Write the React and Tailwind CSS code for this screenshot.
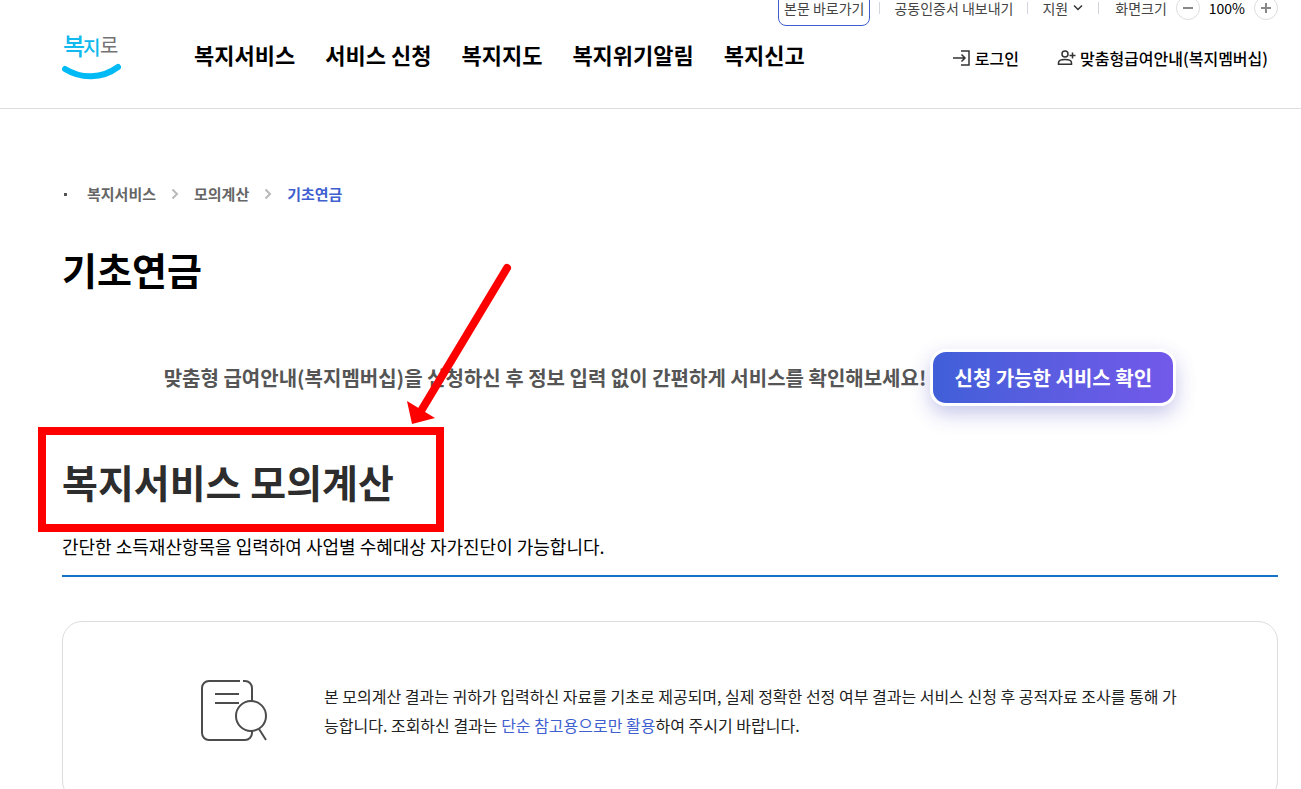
import React, { useState } from "react";

const menus = ["복지서비스", "서비스 신청", "복지지도", "복지위기알림", "복지신고"];

const Logo = () => (
  <svg width="60" height="54" viewBox="0 0 60 54" role="img" aria-label="복지로">
    <g fontWeight="500">
      <text x="1" y="28" fontSize="24" fill="#12b9ee">복</text>
      <text x="21" y="28" fontSize="19" fill="#12b9ee">지</text>
      <text x="38" y="26" fontSize="20" fontWeight="400" fill="#737373">로</text>
    </g>
    <path
      d="M3 42C19 52 40 52 56 40"
      fill="none"
      stroke="#00baf6"
      strokeWidth="6"
      strokeLinecap="round"
    />
  </svg>
);

const LoginIcon = () => (
  <svg width="18" height="18" viewBox="0 0 18 18" fill="none" stroke="#333" strokeWidth="1.5">
    <path d="M8 2h8v14H8M0 9h12M8.500 5.500L12 9l-3.500 3.500" />
  </svg>
);

const MemberIcon = () => (
  <svg width="19" height="18" viewBox="0 0 19 18" fill="none" stroke="#333" strokeWidth="1.5">
    <circle cx="8" cy="5" r="3" />
    <path d="M1.500 15.200h13v-1.500c0-2-3-3.200-6.500-3.200s-6.500 1.200-6.500 3.200zM12.500 6.500h6M15.500 3.500v6" />
  </svg>
);

const Chevron = () => (
  <svg width="8" height="12" viewBox="0 0 8 12" fill="none" stroke="#b9b9b9" strokeWidth="2">
    <path d="M1.500 1.500L6 6l-4.500 4.500" />
  </svg>
);

const ReportIcon = () => (
  <svg
    width="68"
    height="64"
    viewBox="0 0 68 64"
    fill="none"
    stroke="#4c4c4c"
    strokeWidth="2"
    className="shrink-0"
  >
    <path d="M40 2H9a7 7 0 0 0-7 7v45a7 7 0 0 0 7 7h36a7 7 0 0 0 7-7v-2M52 22V9a7 7 0 0 0-7-7h-2" />
    <path d="M15 15h24M15 24h24M59 50l7 11" />
    <circle cx="51" cy="37" r="15" />
  </svg>
);

const Bar = () => <span className="h-3 w-px bg-gray-300" />;

export default function App() {
  const [size, setSize] = useState(100);

  return (
    <div className="h-screen overflow-hidden bg-white font-['Noto_Sans_CJK_KR',sans-serif] text-black">
      <header className="h-[109px] overflow-hidden border-b border-[#ddd] pl-[62px] pr-[23px]">
        <div className="-mt-[10px] flex h-9 items-center justify-end text-sm leading-4 text-[#444]">
          <a
            href="#content"
            className="flex h-full items-center rounded-lg border border-[#3f5fd0] px-[5px]"
          >
            본문 바로가기
          </a>
          <div className="ml-[9px] flex items-center gap-[14px]">
            <Bar />
            <a href="#cert">공동인증서 내보내기</a>
            <Bar />
            <button type="button" className="flex items-center gap-1">
              지원
              <svg width="12" height="8" viewBox="0 0 12 8" fill="none" stroke="#333" strokeWidth="1.5">
                <path d="M2 1.500L6 5.500l4-4" />
              </svg>
            </button>
            <Bar />
          </div>
          <div className="ml-4 flex items-center gap-[9px]">
            <span>화면크기</span>
            <button
              type="button"
              aria-label="축소"
              onClick={() => setSize(size - 10)}
              className="flex size-6 items-center justify-center rounded-full border border-[#ddd]"
            >
              <span className="h-0.5 w-[10px] bg-[#888]" />
            </button>
            <span className="text-black">{size}%</span>
            <button
              type="button"
              aria-label="확대"
              onClick={() => setSize(size + 10)}
              className="flex size-6 items-center justify-center rounded-full border border-[#ddd]"
            >
              <svg width="10" height="10" viewBox="0 0 10 10" stroke="#888" strokeWidth="2">
                <path d="M0 5h10M5 0v10" />
              </svg>
            </button>
          </div>
        </div>

        <div className="flex h-14 items-center">
          <a href="#home">
            <Logo />
          </a>
          <nav className="ml-[72px] flex gap-[30px] text-[22px] font-bold">
            {menus.map((m) => (
              <a key={m} href="#menu" className="whitespace-nowrap">
                {m}
              </a>
            ))}
          </nav>
          <div className="ml-auto mt-2 flex gap-[38px] pr-[10px] text-base font-medium">
            <a href="#login" className="flex items-center gap-1">
              <LoginIcon />
              로그인
            </a>
            <a href="#member" className="flex items-center gap-1">
              <MemberIcon />
              맞춤형급여안내(복지멤버십)
            </a>
          </div>
        </div>
      </header>

      <main id="content" className="pl-[62px] pr-[23px] pt-[73px]">
        <nav className="flex h-6 items-center text-[15px] font-bold text-[#666]">
          <span className="ml-0.5 size-[3px] bg-[#555]" />
          <div className="ml-5 flex items-center gap-[15px]">
            <a href="#service">복지서비스</a>
            <Chevron />
            <a href="#calc">모의계산</a>
            <Chevron />
            <a href="#pension" className="text-[#3f5fd0]">
              기초연금
            </a>
          </div>
        </nav>

        <h1 className="mt-[35px] text-[38px] leading-[56px] font-bold">기초연금</h1>

        <div className="mt-[52px] flex items-center justify-center gap-1">
          <p className="text-xl font-bold text-[#555]">
            맞춤형 급여안내(복지멤버십)을 신청하신 후 정보 입력 없이 간편하게 서비스를 확인해보세요!
          </p>
          <button
            type="button"
            className="h-[57px] w-[246px] shrink-0 rounded-2xl border-3 border-white bg-linear-to-r from-[#3f5fd8] to-[#7359ea] bg-origin-border text-xl font-bold text-white shadow-[0_8px_20px_rgba(70,70,190,0.3)]"
          >
            신청 가능한 서비스 확인
          </button>
        </div>

        <section className="mt-[47px]">
          <div className="relative w-fit">
            <h2 className="text-[39px] leading-[56px] font-bold text-[#2d2d2d]">
              복지서비스 모의계산
            </h2>
            <div className="absolute -top-[26px] -left-6 h-[105px] w-[406px] border-8 border-[#ff0000]" />
            <svg
              width="110"
              height="166"
              viewBox="0 0 110 166"
              className="absolute -top-[192px] left-[342px]"
              fill="#ff0000"
            >
              <path d="M103 7L17 150" stroke="#ff0000" strokeWidth="8" strokeLinecap="round" />
              <path d="M3 140L31 157L8 163z" />
            </svg>
          </div>
          <p className="mt-[25px] border-b-2 border-[#1473c8] pb-[17px] text-lg leading-6">
            간단한 소득재산항목을 입력하여 사업별 수혜대상 자가진단이 가능합니다.
          </p>
        </section>

        <section className="mt-11 flex h-[180px] items-center rounded-[20px] border border-[#ddd] pr-[67px] pl-[137px]">
          <ReportIcon />
          <p className="ml-14 text-base leading-[29px] text-[#222]">
            본 모의계산 결과는 귀하가 입력하신 자료를 기초로 제공되며, 실제 정확한 선정 여부 결과는 서비스 신청 후 공적자료 조사를 통해 가
            <br />
            능합니다. 조회하신 결과는 <span className="text-[#3f5fd0]">단순 참고용으로만 활용</span>하여 주시기 바랍니다.
          </p>
        </section>
      </main>
    </div>
  );
}
